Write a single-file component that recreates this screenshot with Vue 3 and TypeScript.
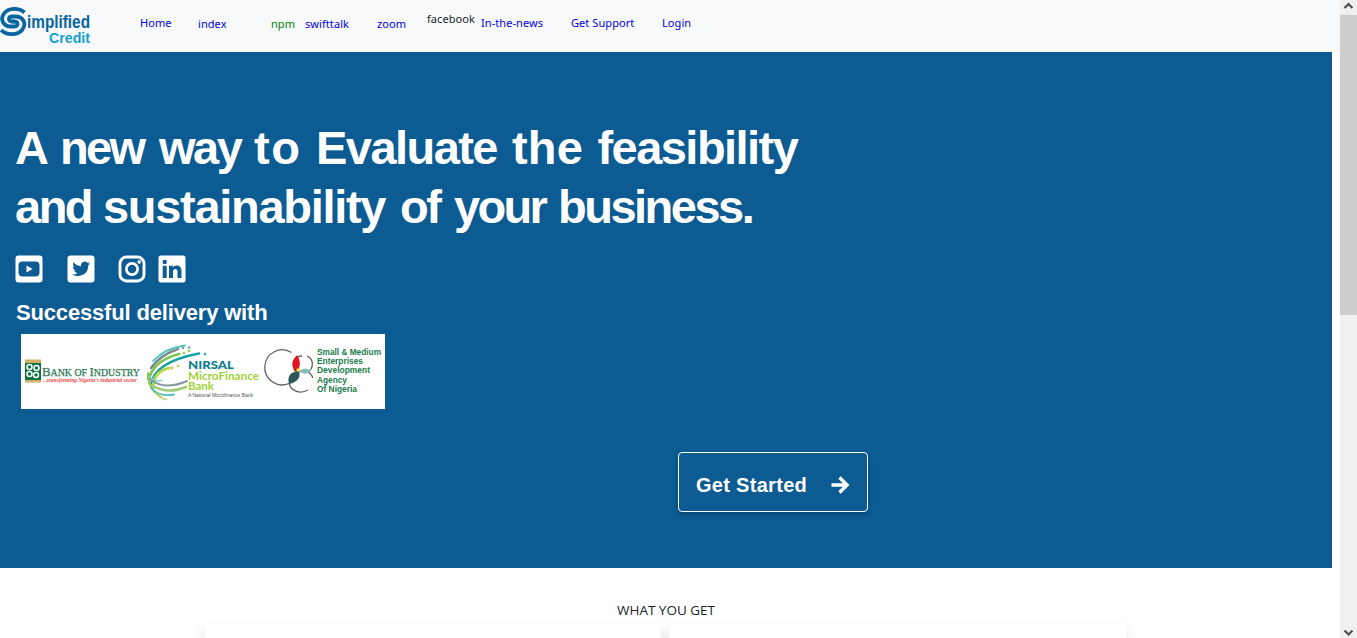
<script setup lang="ts">
interface NavItem {
  label: string
  tone: string
}

const navItems: NavItem[] = [
  { label: 'Home', tone: 'link' },
  { label: 'index', tone: 'link low' },
  { label: 'npm', tone: 'green low' },
  { label: 'swifttalk', tone: 'link low' },
  { label: 'zoom', tone: 'link low' },
  { label: 'facebook', tone: 'dark high' },
  { label: 'In-the-news', tone: 'link' },
  { label: 'Get Support', tone: 'link' },
  { label: 'Login', tone: 'link' },
]
</script>

<template>
  <div class="window">
    <div class="page">
      <header class="topbar">
        <svg class="logo" width="92" height="52" viewBox="0 0 92 52">
          <g fill="none" stroke="#07659f" stroke-width="3.800">
            <path d="M24.500 12.500C19 7.500 8.500 7.300 4 13.500C-.5 20 4 26.500 11 26.500H14.500C18.500 26.200 18.500 21.800 14.500 21.500H12.500" />
            <path d="M1 30.200C6.500 35.500 17.500 35.700 22.500 29.500C27 23 22.500 16.500 15.500 16.500H12C8 16.800 8 21.200 12 21.500H14" />
          </g>
          <text class="logo-main" x="27" y="28" textLength="63" lengthAdjust="spacingAndGlyphs">implified</text>
          <text class="logo-sub" x="49" y="42.500" textLength="41" lengthAdjust="spacingAndGlyphs">Credit</text>
        </svg>
        <nav class="nav">
          <a v-for="item in navItems" :key="item.label" :class="item.tone">{{ item.label }}</a>
        </nav>
      </header>

      <section class="hero">
        <h1>
          <span class="line line-one">
            <span>A</span> <span class="snug">new</span> <span class="close">way</span> <span class="wide">to</span>
            <span>Evaluate</span> <span class="open">the</span> <span>feasibility</span>
          </span>
          <span class="line line-two">
            <span class="close">and</span> <span class="loose">sustainability</span> <span class="close">of</span>
            <span class="snug">your</span> <span class="close">business.</span>
          </span>
        </h1>
        <div class="socials">
          <svg width="28" height="28" viewBox="0 0 28 28">
            <rect x=".5" y=".5" width="27" height="27" rx="3" fill="#fff" />
            <rect x="3.500" y="6.500" width="21" height="15" rx="4" fill="#0c5b92" />
            <path d="M11.500 10.500v7l6-3.500z" fill="#fff" />
          </svg>
          <svg width="28" height="28" viewBox="0 0 28 28">
            <rect x=".5" y=".5" width="27" height="27" rx="3" fill="#fff" />
            <path d="M23.200 8.300c-.7.3-1.400.5-2.100.6.800-.5 1.300-1.200 1.600-2-.7.4-1.500.7-2.300.9a3.700 3.700 0 0 0-6.300 3.400c-3.100-.2-5.800-1.600-7.600-3.900-1 1.700-.5 3.800 1.100 4.900-.6 0-1.200-.2-1.700-.5 0 1.800 1.300 3.300 3 3.700-.5.100-1.100.2-1.700.1.500 1.400 1.800 2.500 3.500 2.500a7.500 7.500 0 0 1-5.400 1.500c5.700 3.500 16 1.100 16-9.200.8-.5 1.400-1.200 1.900-2z" fill="#0c5b92" />
          </svg>
          <svg width="28" height="28" viewBox="0 0 28 28" fill="none" stroke="#fff">
            <rect x="2" y="2" width="24" height="24" rx="6.500" stroke-width="2.900" />
            <circle cx="14" cy="14" r="5.600" stroke-width="2.700" />
            <circle cx="21.200" cy="6.900" r="1.800" fill="#fff" stroke="none" />
          </svg>
          <svg width="28" height="28" viewBox="0 0 28 28">
            <rect x=".5" y=".5" width="27" height="27" rx="2.500" fill="#fff" />
            <g fill="#0c5b92">
              <circle cx="6.700" cy="7" r="2.200" />
              <path d="M4.700 10.800h4V23h-4zM11 10.800h3.800v1.700c2-3 8.700-3 8.700 3.500v7h-4v-6.300c0-3.800-4.500-3.400-4.500 0V23h-4z" />
            </g>
          </svg>
        </div>
        <h2>Successful delivery with</h2>
        <svg class="partners" width="364" height="75" viewBox="0 0 364 75">
          <rect width="364" height="75" fill="#fff" />
          <rect x="4" y="25.500" width="16" height="23" fill="#d2ae69" />
          <rect x="4" y="29" width="16" height="17" fill="#087443" />
          <g fill="none" stroke="#fff" stroke-width="1.500">
            <circle cx="8.500" cy="33" r="2.500" />
            <circle cx="15.500" cy="34" r="2.500" />
            <circle cx="8.500" cy="40" r="2.500" />
            <circle cx="15" cy="41" r="2.500" />
          </g>
          <text class="boi" x="21" y="41.500" textLength="98" lengthAdjust="spacingAndGlyphs"><tspan class="boi-cap">B</tspan>ANK OF <tspan class="boi-cap">I</tspan>NDUSTRY</text>
          <text class="boi-tag" x="22" y="47.700" textLength="94" lengthAdjust="spacingAndGlyphs">...transforming Nigeria's industrial sector</text>

          <g fill="none" stroke-linecap="round">
            <path d="M132 27Q144 14 164 11.500" stroke="#51c4bd" stroke-width="1.800" />
            <path d="M130 34Q139 21 157 15" stroke="#758b8d" stroke-width="2.400" />
            <path d="M128 45Q132 27 158 20" stroke="#7fc34d" stroke-width="2.800" />
            <path d="M130 51Q133 28 178 19.500" stroke="#12a2a2" stroke-width="2.500" />
            <path d="M132 54Q132 38 148 34" stroke="#bcd74c" stroke-width="3" />
            <path d="M127 39Q126 54 140 63" stroke="#8dc550" stroke-width="2" />
            <path d="M129 45Q143 57 166 47" stroke="#83999c" stroke-width="2" />
            <path d="M130 51Q146 61 165 53" stroke="#9dcc79" stroke-width="2.600" />
            <path d="M130 54Q138 63 153 60.500" stroke="#56bdb9" stroke-width="1.800" />
            <path d="M135 59Q139 65 146 65.500" stroke="#c7d875" stroke-width="1.500" />
            <path d="M128 42Q133 48 141 46.500" stroke="#83d5cd" stroke-width="1.500" />
          </g>
          <g fill="#77a5a2">
            <circle cx="162" cy="14" r="1.300" />
            <circle cx="168" cy="13.500" r="1.300" />
            <circle cx="184" cy="20" r="1.300" fill="#28adb1" />
            <circle cx="163" cy="19" r="1.300" fill="#9ace3c" />
            <circle cx="168" cy="17" r="1.300" fill="#9ace3c" />
            <circle cx="151" cy="34" r="1.500" fill="#bdd23d" />
            <circle cx="157" cy="32" r="1.300" fill="#bdd23d" />
          </g>
          <text class="nirsal teal" x="167" y="35" textLength="46" lengthAdjust="spacingAndGlyphs">NIRSAL</text>
          <text class="nirsal lime" x="167" y="45.500" textLength="71" lengthAdjust="spacingAndGlyphs">MicroFinance</text>
          <text class="nirsal lime" x="167" y="55.500" textLength="26" lengthAdjust="spacingAndGlyphs">Bank</text>
          <text class="nirsal-tag" x="167" y="62.500" textLength="65" lengthAdjust="spacingAndGlyphs">A National Microfinance Bank</text>

          <g fill="none" stroke="#5f6465" stroke-width="1.300">
            <path d="M270.500 18.500A17.500 17.500 0 1 0 268 49.500" />
            <path d="M281 22C274 22 270 30 274 37" />
            <path d="M286 22C291 24 293 30 290 35Q288 38 284 39" />
            <path d="M278 38Q288 34 292 44M268 49C270 58 280 60 287 56" />
          </g>
          <path d="M276 21Q267 30 275.500 39Q282 30 276 21z" fill="#e4161d" />
          <path d="M268 50Q265 38 278 37Q281 47 268 50z" fill="#2d565a" />
          <path d="M278 37Q284 32 290 37Q284 42 278 37z" fill="#86babb" />
          <circle cx="277" cy="36" r="1.700" fill="#f1dc24" />
          <g class="smedan">
            <text x="296" y="20.500" textLength="64" lengthAdjust="spacingAndGlyphs">Small &amp; Medium</text>
            <text x="296" y="30" textLength="46" lengthAdjust="spacingAndGlyphs">Enterprises</text>
            <text x="296" y="39" textLength="53" lengthAdjust="spacingAndGlyphs">Development</text>
            <text x="296" y="49" textLength="30" lengthAdjust="spacingAndGlyphs">Agency</text>
            <text x="296" y="58" textLength="40" lengthAdjust="spacingAndGlyphs">Of Nigeria</text>
          </g>
        </svg>
        <button class="start">
          <span>Get Started</span>
          <svg width="19" height="18" viewBox="0 0 19 18" fill="none" stroke="#fff" stroke-width="3.400">
            <path d="M.5 9H16M8.500 1.500L16 9L8.500 16.500" />
          </svg>
        </button>
      </section>

      <section class="offers">
        <h3>WHAT YOU GET</h3>
        <div class="cards">
          <div class="card"></div>
          <div class="card"></div>
        </div>
      </section>
    </div>
    <aside class="scrollbar">
      <svg width="17" height="15" viewBox="0 0 17 15" fill="none" stroke="#505050" stroke-width="2.200"><path d="M4.500 8L8.500 4L12.500 8" /></svg>
      <div class="thumb"></div>
      <svg class="down" width="17" height="15" viewBox="0 0 17 15" fill="none" stroke="#505050" stroke-width="2.200"><path d="M4.500 7.500L8.500 11.500L12.500 7.500" /></svg>
    </aside>
  </div>
</template>

<style>
html,
body {
  margin: 0;
  overflow: hidden;
}
</style>

<style scoped>
.window {
  display: flex;
  width: 1357px;
  height: 638px;
  overflow: hidden;
  background: #fff;
  font-family: "Noto Sans", "Open Sans", sans-serif;
}
.page {
  width: 1340px;
  height: 638px;
  overflow: hidden;
}
.topbar {
  display: flex;
  height: 52px;
  background: #f8f9fb;
}
.logo {
  flex: none;
  margin-right: 48px;
  overflow: visible;
}
.logo-main,
.logo-sub {
  font-family: "Liberation Sans", Arial, sans-serif;
  font-weight: 700;
}
.logo-main {
  font-size: 17.500px;
  fill: #07659f;
}
.logo-sub {
  font-size: 15px;
  fill: #12a2cf;
}
.nav {
  display: grid;
  grid-template-columns: 58px 73px 34px 72px 50px 54px 90px 91px 60px;
  align-items: start;
  padding-top: 15px;
  font-size: 11px;
  line-height: 16px;
  letter-spacing: 0.07px;
  white-space: nowrap;
}
.link {
  color: #0000ee;
}
.green {
  color: #008000;
}
.dark {
  color: #212529;
}
.low {
  padding-top: 1px;
}
.high {
  margin-top: -4px;
}
.hero {
  display: flex;
  flex-direction: column;
  align-items: flex-start;
  box-sizing: border-box;
  width: 1332px;
  height: 516px;
  padding: 67px 0 0 15px;
  background: #0c5b92;
  color: #fff;
  font-family: "Liberation Sans", Arial, sans-serif;
}
h1,
h2,
h3 {
  margin: 0;
}
h1 {
  height: 117px;
  font-size: 47px;
  line-height: 58.5px;
  font-weight: 700;
  letter-spacing: -1.550px;
  white-space: nowrap;
}
.line {
  display: grid;
}
.line-one {
  grid-template-columns: 45px 99px 95px 62px 196px 85.500px 210px;
}
.line-two {
  grid-template-columns: 88px 297px 54px 104px 210px;
}
.snug {
  letter-spacing: -2.700px;
}
.close {
  letter-spacing: -2.500px;
}
.loose {
  letter-spacing: -1.300px;
}
.open {
  letter-spacing: 0.200px;
}
.wide {
  letter-spacing: 1.500px;
}
.socials {
  display: flex;
  gap: 23.500px;
  height: 28px;
  margin-top: 19px;
}
.socials svg:last-child {
  margin-left: -11.500px;
}
h2 {
  margin: 17px 0 0 1px;
  font-size: 22px;
  line-height: 26px;
  font-weight: 700;
  letter-spacing: -0.170px;
}
.partners {
  flex: none;
  margin: 8px 0 0 5.500px;
}
.boi {
  font-family: "Liberation Serif", serif;
  font-size: 10px;
  font-weight: 400;
  fill: #2b7951;
  stroke: #2b7951;
  stroke-width: 0.250px;
}
.boi-cap {
  font-size: 13px;
}
.boi-tag {
  font: italic 700 6px "Liberation Serif", serif;
  fill: #ec4444;
}
.nirsal {
  font: 700 11px Lato, sans-serif;
}
.teal {
  font-size: 12px;
  font-weight: 900;
  fill: #087f89;
}
.lime {
  fill: #a2d137;
}
.nirsal-tag {
  font: 5px "Liberation Sans", sans-serif;
  fill: #555;
}
.smedan {
  font: 700 8.500px "Liberation Sans", sans-serif;
  fill: #187b4c;
}
.start {
  display: flex;
  align-items: center;
  justify-content: space-between;
  box-sizing: border-box;
  width: 190px;
  height: 60px;
  margin: 43px 0 0 663px;
  padding: 6px 17px 0;
  border: 1px solid #fff;
  border-radius: 4px;
  background: transparent;
  box-shadow: 0 2px 4px rgba(0, 0, 0, 0.25);
  color: #fff;
  font: 700 20px "Liberation Sans", Arial, sans-serif;
  letter-spacing: 0.300px;
}
.offers {
  width: 1332px;
  padding-top: 32px;
}
h3 {
  height: 24px;
  color: #212529;
  font-family: "Open Sans", sans-serif;
  font-size: 13.500px;
  font-weight: 400;
  line-height: 20px;
  text-align: center;
}
.cards {
  display: flex;
  gap: 8px;
  margin-left: 205px;
}
.card {
  width: 456px;
  height: 200px;
  border-radius: 4px;
  background: #fff;
  box-shadow: 0 8px 16px rgba(0, 0, 0, 0.13);
}
.card:last-child {
  width: 457px;
}
.scrollbar {
  display: flex;
  flex-direction: column;
  width: 17px;
  height: 638px;
  background: #f0f0f0;
}
.thumb {
  height: 300px;
  background: #cdcdcd;
}
.down {
  margin-top: auto;
}
</style>
